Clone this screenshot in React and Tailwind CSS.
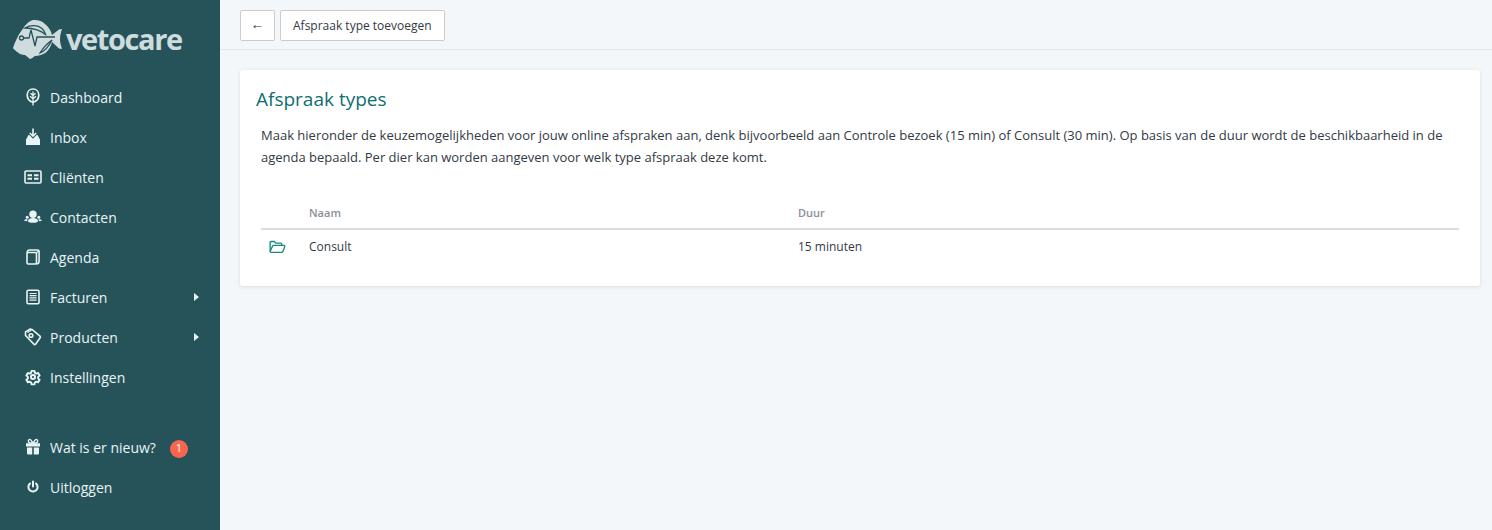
const ICON = "h-[18px] w-[18px] text-[#e8f4f5]";

const LeafIcon = () => (
  <svg viewBox="0 0 18 18" className={ICON} fill="none" stroke="currentColor" strokeWidth="1.700">
    <path d="M9 1c3.400 0 5.800 2.600 5.800 6 0 3.700-2.600 6.400-5.800 7.300C5.800 13.400 3.200 10.700 3.200 7 3.200 3.600 5.600 1 9 1z" />
    <path d="M9 3.500V17.500M9 7.500 6.500 5.300M9 7.500l2.500-2.200M9 10.800 6 8.300M9 10.800l3-2.500" strokeWidth="1.300" />
  </svg>
);

const InboxIcon = () => (
  <svg viewBox="0 0 18 18" className={ICON} fill="currentColor">
    <path d="M8.200.5h1.600v5.800l1.800-1.800 1.100 1.100L9 9.300 5.300 5.600l1.100-1.100 1.800 1.800z" />
    <path d="M4.500 7h1l3.500 3.700L12.500 7h1l2.500 4.500V17H2v-5.500z" />
  </svg>
);

const CardIcon = () => (
  <svg viewBox="0 0 18 18" className={ICON} fill="currentColor">
    <rect x="1" y="3" width="16" height="12" rx="1" fill="none" stroke="currentColor" strokeWidth="1.600" />
    <path d="M3.500 6.300h4.500v2H3.500zM3.500 9.700h4.500v2H3.500zM10 6.300h4.500v2H10zM10 9.700h4.500v2H10z" />
  </svg>
);

const PeopleIcon = () => (
  <svg viewBox="0 0 18 18" className={ICON} fill="currentColor">
    <circle cx="9" cy="6.200" r="3.700" />
    <path d="M4 13.300c0-2.300 2.200-3.300 5-3.300s5 1 5 3.300c0 .9-1.500 1.500-5 1.500s-5-.6-5-1.500z" />
    <circle cx="3.200" cy="9.300" r="1.500" />
    <circle cx="14.800" cy="9.300" r="1.500" />
    <path d="M.2 12.800c0-1 1.200-1.800 3.300-1.800l-.4 2.200zM17.800 12.800c0-1-1.200-1.800-3.300-1.800l.4 2.200z" />
  </svg>
);

const AgendaIcon = () => (
  <svg viewBox="0 0 18 18" className={ICON} fill="none" stroke="currentColor" strokeWidth="1.600">
    <rect x="3" y="4.500" width="9.500" height="11.500" rx="1.200" />
    <path d="M3 4.800C3.200 3 4 2 5.500 2h8c1 0 1.600.6 1.600 1.600v9.400c0 1.500-1 3-2.600 3" />
    <path d="M12.500 4.800 15 2.500" strokeWidth="1.200" />
  </svg>
);

const InvoiceIcon = () => (
  <svg viewBox="0 0 18 18" className={ICON} fill="none" stroke="currentColor" strokeWidth="1.600">
    <rect x="3" y="2.300" width="12" height="13.400" rx="1.300" />
    <path d="M5.500 5.500h7M5.500 7.700h7M5.500 9.900h7M5.500 12.100h7" strokeWidth="1.200" />
  </svg>
);

const TagIcon = () => (
  <svg viewBox="0 0 18 18" className={ICON} fill="none" stroke="currentColor" strokeWidth="1.600">
    <path d="M1.500 7.500V4L6 1l2 .5 8 6.700c.5.500.5 1 .1 1.500l-4.500 6.500c-.4.500-1 .5-1.500.1z" />
    <circle cx="7" cy="7.500" r="1.800" />
    <path d="M3.500 4.500 7.500 2" strokeWidth="1.300" />
  </svg>
);

const GearIcon = () => (
  <svg viewBox="-2 -2 28 28" className={ICON} fill="none" stroke="currentColor" strokeWidth="3" strokeLinejoin="round">
    <path d="M9.700 2.500h4.600l.6 3 2.200 1.300 2.900-1 2.300 4-2.300 2v2.400l2.300 2-2.300 4-2.900-1-2.200 1.300-.6 3H9.700l-.6-3-2.200-1.300-2.900 1-2.300-4 2.300-2v-2.400l-2.300-2 2.300-4 2.900 1 2.200-1.300z" />
    <circle cx="12" cy="12" r="3.200" />
  </svg>
);

const GiftIcon = () => (
  <svg viewBox="0 0 18 18" className={ICON} fill="currentColor">
    <path d="M2 5.200h14v3.300H2zM3 9.500h5.200v7H4.200A1.200 1.200 0 0 1 3 15.300zM9.800 9.500H15v5.800a1.200 1.200 0 0 1-1.200 1.200h-4z" />
    <path d="M9 5 7 2.200C6 1 4.200 1.500 4.300 3c.1 1.200 1.200 2 2.200 2zM9 5l2-2.800c1-1.200 2.800-.7 2.700.8-.1 1.200-1.200 2-2.200 2z" fill="none" stroke="currentColor" strokeWidth="1.300" />
  </svg>
);

const PowerIcon = () => (
  <svg viewBox="0 0 18 18" className={ICON} fill="none" stroke="currentColor" strokeWidth="2" strokeLinecap="round">
    <path d="M9 3.500v5M6 5.500a4.600 4.600 0 1 0 6 0" />
  </svg>
);

const FolderIcon = () => (
  <svg viewBox="0 0 18 14" className="h-[14px] w-[17px] text-[#15897f]" fill="none" stroke="currentColor" strokeWidth="1.400" strokeLinejoin="round">
    <path d="M1.200 11.800V2.200c0-.6.400-1 1-1h3.400l1.600 1.700h5.300c.6 0 1 .4 1 1v1.300" />
    <path d="M1.200 11.800 3.800 6c.2-.4.500-.7 1-.7h11c.7 0 1.100.6.900 1.200l-2 5.300c-.2.500-.6.800-1.100.8H2.200c-.6 0-1-.3-1-.8z" />
  </svg>
);

const Logo = () => (
  <div className="flex h-[77px] items-center pl-[12px]">
    <svg viewBox="0 0 50 42" className="h-[42px] w-[50px] text-[#cfdcde]">
      <path
        fill="currentColor"
        d="M1 30C3 24 6 17 10 12c3-5 7-9 11-10 5-.5 9 1 12 4 4 3 6 7 7 11l7-5.500 3-.5c-1 3-2 6-2 10.500 0 3.500 1 6 2 9.500l-3-.5-7-6.500c-1 4-3 8-6 10.500-3.500 2-7 3.500-11 3.500-1.500 1-3 2.500-5 3-2-1-3-3-5-4-3.500 0-5.500-1-7-2.500C4 33 2 31.500 1 30z"
      />
      <path
        fill="none"
        stroke="#26535a"
        strokeWidth="1.300"
        d="M11.500 20H17l2-8 4 16 2-9h18M13 10c6-3.500 13-3 17 .5 2 2 3 4 3.500 6-5-4-12-6.500-20.500-6.500zM28 35c5-2 9-7 12-13-4 3-9 8-12 13z"
      />
      <circle cx="9.500" cy="20" r="2" fill="#cfdcde" stroke="#26535a" strokeWidth="1.300" />
    </svg>
    <span className="ml-[4px] text-[29px] leading-none font-bold tracking-[-1.4px] text-[#cfdcde]">vetocare</span>
  </div>
);

const NavItem = ({ icon, label, arrow, badge }) => (
  <a className="flex h-10 items-center pr-[21px] pl-[24px] text-[14px] text-[#e8f4f5]">
    <span className="flex w-[18px] justify-center">{icon}</span>
    <span className="ml-[8px]">{label}</span>
    {badge && (
      <span className="mt-[3px] ml-[14px] flex h-[18px] w-[18px] items-center justify-center rounded-full bg-[#f8664f] text-[11px] text-white">
        {badge}
      </span>
    )}
    {arrow && (
      <svg viewBox="0 0 5 8" className="ml-auto h-[8px] w-[5px] text-[#e8f4f5]" fill="currentColor">
        <path d="M0 0l5 4-5 4z" />
      </svg>
    )}
  </a>
);

const navItems = [
  { label: "Dashboard", icon: <LeafIcon /> },
  { label: "Inbox", icon: <InboxIcon /> },
  { label: "Cliënten", icon: <CardIcon /> },
  { label: "Contacten", icon: <PeopleIcon /> },
  { label: "Agenda", icon: <AgendaIcon /> },
  { label: "Facturen", icon: <InvoiceIcon />, arrow: true },
  { label: "Producten", icon: <TagIcon />, arrow: true },
  { label: "Instellingen", icon: <GearIcon /> },
];

const App = () => {
  return (
    <div className="flex h-[530px] overflow-hidden bg-[#f4f7fa] font-['Open_Sans',sans-serif]">
      <aside className="flex w-[220px] shrink-0 flex-col bg-[#26535a]">
        <Logo />
        <nav>
          {navItems.map((item, index) => (
            <NavItem key={index} {...item} />
          ))}
        </nav>
        <div className="mt-[30px]">
          <NavItem label="Wat is er nieuw?" icon={<GiftIcon />} badge="1" />
          <NavItem label="Uitloggen" icon={<PowerIcon />} />
        </div>
      </aside>

      <main className="flex-1">
        <div className="flex h-[50px] items-start gap-[5px] border-b border-[#e3e7eb] pt-[10px] pl-[20px]">
          <button className="h-[31px] w-[35px] rounded-[2px] border border-[#ccc] bg-white pb-[4px] text-[14px] text-[#333a45]">←</button>
          <button className="h-[31px] rounded-[2px] border border-[#ccc] bg-white px-[12px] text-[12px] text-[#333a45]">
            Afspraak type toevoegen
          </button>
        </div>

        <section className="mt-[20px] mr-[12px] ml-[20px] h-[216px] rounded-[3px] bg-white px-[16px] pt-[15px] shadow-[0_1px_4px_rgba(0,0,0,0.1)]">
          <h1 className="text-[19px] leading-[28px] text-[#0f6e70]">Afspraak types</h1>
          <p className="mt-[11px] ml-[5px] text-[13px] leading-[22px] text-[#333a45]">
            Maak hieronder de keuzemogelijkheden voor jouw online afspraken aan, denk bijvoorbeeld aan Controle bezoek (15 min) of Consult (30 min). Op basis van de duur wordt de beschikbaarheid in de agenda bepaald. Per dier kan worden aangeven voor welk type afspraak deze komt.
          </p>
          <table className="mt-[28px] ml-[5px] w-[1198px] text-[12px] text-[#333a45]">
            <thead>
              <tr className="h-[33px] border-b-2 border-[#ddd] text-left text-[11px] text-[#8a8f98]">
                <th className="w-[48px]"></th>
                <th className="w-[489px] pt-[2px] font-semibold">Naam</th>
                <th className="pt-[2px] font-semibold">Duur</th>
              </tr>
            </thead>
            <tbody>
              <tr className="h-[35px]">
                <td className="pl-[8px]"><FolderIcon /></td>
                <td>Consult</td>
                <td>15 minuten</td>
              </tr>
            </tbody>
          </table>
        </section>
      </main>
    </div>
  );
};

export default App;
